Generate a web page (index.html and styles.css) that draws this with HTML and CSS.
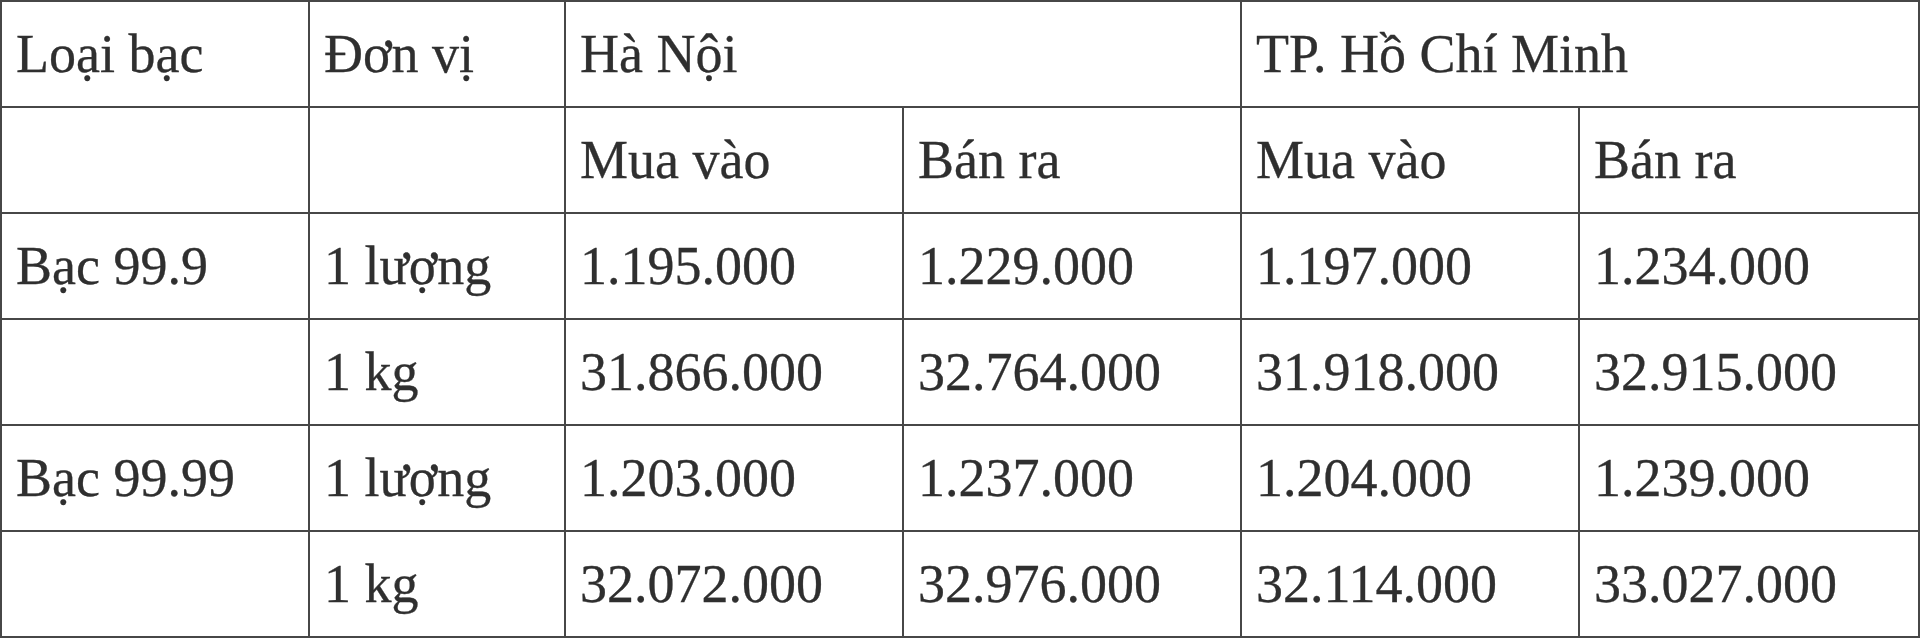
FILE: index.html
```html
<!DOCTYPE html>
<html lang="vi">
<head>
<meta charset="utf-8">
<title>Giá bạc</title>
<link rel="stylesheet" href="styles.css">
</head>
<body>
<table class="price-table">
  <colgroup>
    <col class="c-type">
    <col class="c-unit">
    <col class="c-price">
    <col class="c-price">
    <col class="c-price">
    <col class="c-price-last">
  </colgroup>
  <tbody>
    <tr>
      <td>Loại bạc</td>
      <td>Đơn vị</td>
      <td colspan="2">Hà Nội</td>
      <td colspan="2">TP. Hồ Chí Minh</td>
    </tr>
    <tr>
      <td></td>
      <td></td>
      <td>Mua vào</td>
      <td>Bán ra</td>
      <td>Mua vào</td>
      <td>Bán ra</td>
    </tr>
    <tr>
      <td>Bạc 99.9</td>
      <td>1 lượng</td>
      <td>1.195.000</td>
      <td>1.229.000</td>
      <td>1.197.000</td>
      <td>1.234.000</td>
    </tr>
    <tr>
      <td></td>
      <td>1 kg</td>
      <td>31.866.000</td>
      <td>32.764.000</td>
      <td>31.918.000</td>
      <td>32.915.000</td>
    </tr>
    <tr>
      <td>Bạc 99.99</td>
      <td>1 lượng</td>
      <td>1.203.000</td>
      <td>1.237.000</td>
      <td>1.204.000</td>
      <td>1.239.000</td>
    </tr>
    <tr>
      <td></td>
      <td>1 kg</td>
      <td>32.072.000</td>
      <td>32.976.000</td>
      <td>32.114.000</td>
      <td>33.027.000</td>
    </tr>
  </tbody>
</table>
</body>
</html>
```

FILE: styles.css
```css
html, body {
  margin: 0;
  padding: 0;
  background: #ffffff;
}

.price-table {
  border-collapse: collapse;
  table-layout: fixed;
  width: 1918px;
  margin-left: 0;
  font-family: "Liberation Serif", "Times New Roman", serif;
  font-size: 54px;
  color: #2f2f2f;
}

.c-type { width: 308px; }
.c-unit { width: 256px; }
.c-price { width: 338px; }
.c-price-last { width: 340px; }

.price-table td {
  border: 2px solid #474747;
  height: 104px;
  padding: 0 14px;
  vertical-align: middle;
  white-space: nowrap;
  line-height: 60px;
  -webkit-text-stroke: 0.3px #2f2f2f;
}
```
